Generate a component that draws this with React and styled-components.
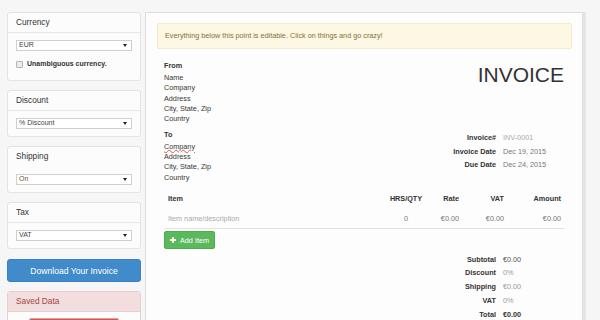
import React from 'react';
import styled, { createGlobalStyle } from 'styled-components';

const GlobalStyle = createGlobalStyle`
  html, body {
    margin: 0;
    padding: 0;
  }
  body {
    background: #f6f6f6;
    font-family: "Liberation Sans", Arial, sans-serif;
    font-size: 7.25px;
    line-height: 10.4px;
    color: #333;
    overflow: hidden;
  }
`;

const Page = styled.div`
  display: flex;
  align-items: flex-start;
  gap: 4px;
  height: 320px;
  padding: 12px 0 0 7px;
  box-sizing: border-box;
  overflow: hidden;
`;

const Sidebar = styled.aside`
  width: 134px;
  flex: none;
  display: flex;
  flex-direction: column;
  gap: 9px;
`;

const Card = styled.section`
  background: #fcfcfc;
  border: 1px solid ${(p) => (p.$danger ? '#ebccd1' : '#e3e3e3')};
  border-radius: 3px;
  overflow: hidden;
`;

const CardHeader = styled.div`
  height: 19px;
  padding: 0 8px;
  display: flex;
  align-items: center;
  font-size: 8.3px;
  color: ${(p) => (p.$danger ? '#a94442' : '#333')};
  background: ${(p) => (p.$danger ? '#f2dede' : 'transparent')};
  border-bottom: 1px solid ${(p) => (p.$plain ? 'transparent' : p.$danger ? '#ebccd1' : '#e6e6e6')};
`;

const CardBody = styled.div`
  padding: 7px 8px ${(p) => (p.$loose ? '11px' : '7px')};
  display: flex;
  flex-direction: column;
`;

const Select = styled.div`
  height: 11px;
  box-sizing: border-box;
  display: flex;
  align-items: center;
  justify-content: space-between;
  padding: 0 4px 0 2px;
  background: #fff;
  border: 1px solid #cfcfcf;
  font-size: 7px;
  color: ${(p) => p.$tone || '#444'};
`;

const Caret = styled.span`
  width: 0;
  height: 0;
  border-left: 2px solid transparent;
  border-right: 2px solid transparent;
  border-top: 3px solid #222;
`;

const CheckRow = styled.label`
  display: flex;
  align-items: center;
  gap: 4px;
  height: 10px;
  margin-top: 8px;
  font-size: 7px;
  font-weight: bold;
  color: #333;
`;

const CheckBox = styled.span`
  width: 5px;
  height: 5px;
  border: 1px solid #b5b5b5;
  border-radius: 1px;
  background: #ececec;
`;

const DownloadButton = styled.button`
  height: 23px;
  margin-top: 1px;
  border: 1px solid #3a80c4;
  border-radius: 3px;
  background: #428bca;
  color: #fff;
  font-family: inherit;
  font-size: 8.6px;
  cursor: pointer;
`;

const DangerButton = styled.button`
  align-self: center;
  width: 90px;
  height: 18px;
  margin-top: -1px;
  border: 1px solid #e0a19d;
  border-radius: 2px;
  background: #d9534f;
`;

const Sheet = styled.main`
  width: 438px;
  min-height: 340px;
  flex: none;
  box-sizing: border-box;
  background: #fdfdfd;
  border: 1px solid #dddddd;
  box-shadow: 3px 0 0 #e6e6e6;
  padding: 10px 10px 0 11px;
`;

const Alert = styled.div`
  padding: 7px;
  background: #fcf8e3;
  border: 1px solid #f6ebc8;
  border-radius: 2px;
  color: #8a6d3b;
`;

const Content = styled.div`
  margin: 12px 8px 0 7px;
  display: flex;
  flex-direction: column;
`;

const Row = styled.div`
  display: flex;
  justify-content: space-between;
  align-items: flex-start;
  margin-top: ${(p) => p.$top || 0}px;
`;

const AddressBlock = styled.div`
  display: flex;
  flex-direction: column;
`;

const BlockLabel = styled.div`
  font-weight: bold;
  margin-bottom: 1px;
`;

const Line = styled.div`
  color: #383838;
  ${(p) => p.$misspelt && 'align-self: flex-start; text-decoration: underline wavy #e0504a; text-decoration-thickness: 0.6px; text-underline-offset: 0;'}
`;

const Title = styled.h1`
  margin: 2px 0 0;
  font-size: 21px;
  line-height: 23px;
  font-weight: normal;
  color: #333;
`;

const Pairs = styled.div`
  display: grid;
  grid-template-columns: auto 61px;
  column-gap: 7px;
  row-gap: 3.3px;
  margin-top: ${(p) => p.$top || 0}px;
  align-self: ${(p) => (p.$end ? 'flex-end' : 'auto')};
`;

const PairLabel = styled.div`
  text-align: right;
  font-weight: bold;
  color: #333;
`;

const PairValue = styled.div`
  color: ${(p) => p.$tone || '#777'};
  font-weight: ${(p) => (p.$strong ? 'bold' : 'normal')};
`;

const TableRow = styled.div`
  display: grid;
  grid-template-columns: 222px 40px 37px 45px 56px;
  padding: ${(p) => (p.$head ? '5.4px 0 5.4px' : '4.3px 0 4.1px')};
  margin-top: ${(p) => (p.$head ? '5px' : '0')};
  border-bottom: ${(p) => (p.$head ? 'none' : '1px solid #e2e2e2')};
  font-weight: ${(p) => (p.$head ? 'bold' : 'normal')};
  color: ${(p) => (p.$head ? '#333' : '#777')};
`;

const Cell = styled.div`
  text-align: ${(p) => p.$align || 'left'};
  padding: ${(p) => (p.$align === 'right' ? `0 ${p.$pad ?? 4}px 0 0` : p.$align === 'center' ? '0' : '0 0 0 4px')};
  color: ${(p) => p.$tone || 'inherit'};
`;

const AddButton = styled.button`
  align-self: flex-start;
  display: flex;
  align-items: center;
  gap: 4px;
  height: 18px;
  margin-top: 2px;
  padding: 0 5px;
  border: 1px solid #4cae4c;
  border-radius: 2px;
  background: #5cb85c;
  color: #fff;
  font-family: inherit;
  font-size: 7.25px;
  cursor: pointer;
`;

const PlusIcon = () => (
  <svg width="6" height="6" viewBox="0 0 6 6">
    <path d="M3 0.2V5.8M0.2 3H5.8" stroke="#fff" strokeWidth="1.8" />
  </svg>
);

const SideCard = ({ title, value, tone, plain, children }) => (
  <Card>
    <CardHeader $plain={plain}>{title}</CardHeader>
    <CardBody $loose={!!children}>
      <Select $tone={tone}>
        <span>{value}</span>
        <Caret />
      </Select>
      {children}
    </CardBody>
  </Card>
);

const totals = [
  ['Subtotal', '€0.00', '#555'],
  ['Discount', '0%', '#999'],
  ['Shipping', '€0.00', '#999'],
  ['VAT', '0%', '#999'],
];

export default function App() {
  return (
    <>
      <GlobalStyle />
      <Page>
        <Sidebar>
          <SideCard title="Currency" value="EUR">
            <CheckRow>
              <CheckBox />
              Unambiguous currency.
            </CheckRow>
          </SideCard>
          <SideCard title="Discount" value="% Discount" />
          <SideCard title="Shipping" value="On" tone="#6e5236" plain />
          <SideCard title="Tax" value="VAT" />
          <DownloadButton>Download Your Invoice</DownloadButton>
          <Card $danger>
            <CardHeader $danger>Saved Data</CardHeader>
            <CardBody>
              <DangerButton />
            </CardBody>
          </Card>
        </Sidebar>

        <Sheet>
          <Alert>Everything below this point is editable. Click on things and go crazy!</Alert>
          <Content>
            <Row>
              <AddressBlock>
                <BlockLabel>From</BlockLabel>
                <Line>Name</Line>
                <Line>Company</Line>
                <Line>Address</Line>
                <Line>City, State, Zip</Line>
                <Line>Country</Line>
              </AddressBlock>
              <Title>INVOICE</Title>
            </Row>

            <Row $top={5.4}>
              <AddressBlock>
                <BlockLabel>To</BlockLabel>
                <Line $misspelt>Company</Line>
                <Line>Address</Line>
                <Line>City, State, Zip</Line>
                <Line>Country</Line>
              </AddressBlock>
              <Pairs $top={2.7}>
                <PairLabel>Invoice#</PairLabel>
                <PairValue $tone="#aaa">INV-0001</PairValue>
                <PairLabel>Invoice Date</PairLabel>
                <PairValue>Dec 19, 2015</PairValue>
                <PairLabel>Due Date</PairLabel>
                <PairValue>Dec 24, 2015</PairValue>
              </Pairs>
            </Row>

            <TableRow $head>
              <Cell>Item</Cell>
              <Cell $align="center">HRS/QTY</Cell>
              <Cell $align="right">Rate</Cell>
              <Cell $align="right">VAT</Cell>
              <Cell $align="right" $pad={3}>Amount</Cell>
            </TableRow>
            <TableRow>
              <Cell $tone="#aaa">Item name/description</Cell>
              <Cell $align="center">0</Cell>
              <Cell $align="right">€0.00</Cell>
              <Cell $align="right">€0.00</Cell>
              <Cell $align="right" $pad={3}>€0.00</Cell>
            </TableRow>

            <AddButton>
              <PlusIcon />
              Add Item
            </AddButton>

            <Pairs $top={5.5} $end>
              {totals.map(([label, value, tone]) => (
                <React.Fragment key={label}>
                  <PairLabel>{label}</PairLabel>
                  <PairValue $tone={tone}>{value}</PairValue>
                </React.Fragment>
              ))}
              <PairLabel>Total</PairLabel>
              <PairValue $tone="#333" $strong>€0.00</PairValue>
            </Pairs>
          </Content>
        </Sheet>
      </Page>
    </>
  );
}
